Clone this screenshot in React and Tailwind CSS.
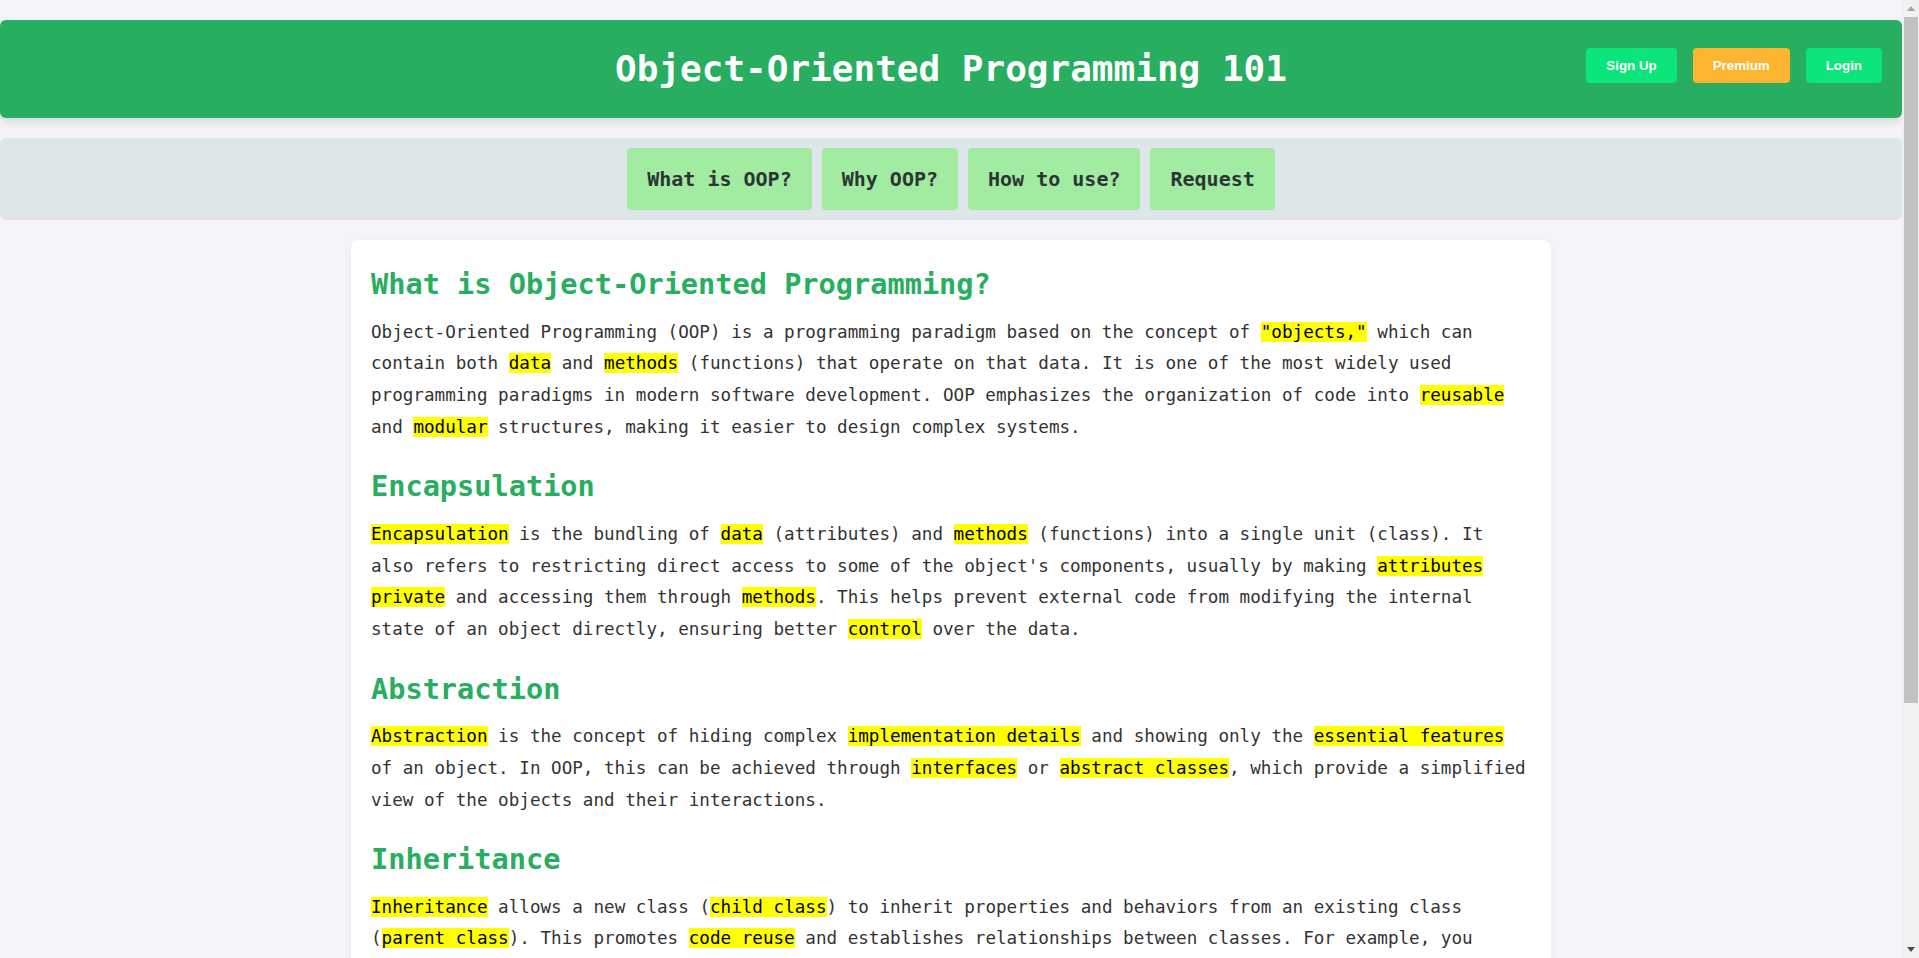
import React from 'react';

const mono = "font-['DejaVu_Sans_Mono','Liberation_Mono',monospace]";

const Hl = ({ children }) => <span className="bg-[#ffff00] text-black">{children}</span>;

const sections = [
  {
    title: 'What is Object-Oriented Programming?',
    body: (
      <>
        Object-Oriented Programming (OOP) is a programming paradigm based on the concept of <Hl>"objects,"</Hl> which can
        contain both <Hl>data</Hl> and <Hl>methods</Hl> (functions) that operate on that data. It is one of the most widely used
        programming paradigms in modern software development. OOP emphasizes the organization of code into <Hl>reusable</Hl> and{' '}
        <Hl>modular</Hl> structures, making it easier to design complex systems.
      </>
    ),
  },
  {
    title: 'Encapsulation',
    body: (
      <>
        <Hl>Encapsulation</Hl> is the bundling of <Hl>data</Hl> (attributes) and <Hl>methods</Hl> (functions) into a single unit (class). It
        also refers to restricting direct access to some of the object's components, usually by making <Hl>attributes</Hl>{' '}
        <Hl>private</Hl> and accessing them through <Hl>methods</Hl>. This helps prevent external code from modifying the internal
        state of an object directly, ensuring better <Hl>control</Hl> over the data.
      </>
    ),
  },
  {
    title: 'Abstraction',
    body: (
      <>
        <Hl>Abstraction</Hl> is the concept of hiding complex <Hl>implementation details</Hl> and showing only the <Hl>essential features</Hl>{' '}
        of an object. In OOP, this can be achieved through <Hl>interfaces</Hl> or <Hl>abstract classes</Hl>, which provide a simplified
        view of the objects and their interactions.
      </>
    ),
  },
  {
    title: 'Inheritance',
    body: (
      <>
        <Hl>Inheritance</Hl> allows a new class (<Hl>child class</Hl>) to inherit properties and behaviors from an existing class
        (<Hl>parent class</Hl>). This promotes <Hl>code reuse</Hl> and establishes relationships between classes. For example, you
        could create a general "Vehicle" class and then extend it into more specific classes like "Car" or "Bike".
      </>
    ),
  },
  {
    title: 'Polymorphism',
    body: (
      <>
        <Hl>Polymorphism</Hl> means "many forms." It allows objects of different classes to be treated as objects of a common
        parent class. The same <Hl>method</Hl> can behave differently depending on the object that calls it, through{' '}
        <Hl>method overriding</Hl> and <Hl>method overloading</Hl>.
      </>
    ),
  },
];

// classic browser scrollbar, drawn since headless chrome hides it
const Scrollbar = () => (
  <div className="w-[17px] shrink-0 h-full flex flex-col bg-[#f1f1f1]">
    <div className="h-[17px] flex items-center justify-center">
      <svg width="8" height="5" viewBox="0 0 8 5"><path d="M0 5 L4 0 L8 5 Z" fill="#a3a3a3" /></svg>
    </div>
    <div className="h-[686px] ml-[2px] mr-[1px] bg-[#c1c1c1]" />
    <div className="flex-1" />
    <div className="h-[17px] flex items-center justify-center">
      <svg width="8" height="5" viewBox="0 0 8 5"><path d="M0 0 L8 0 L4 5 Z" fill="#505050" /></svg>
    </div>
  </div>
);

const App = () => {
  return (
    <div className={`flex h-screen overflow-hidden bg-[#f4f4f9] ${mono}`}>
      <div className="flex-1 min-w-0 h-full overflow-hidden">
        <div className="pt-5 pb-10">
          <header className="relative flex items-center justify-center h-[98px] bg-[#27ae60] rounded-[6px] shadow-[0_4px_10px_rgba(0,0,0,0.12)]">
            <h1 className="text-[36px] font-bold text-white leading-none">Object-Oriented Programming 101</h1>
            <div className="absolute right-5 top-[28px] flex gap-4 font-['Liberation_Sans',Arial,sans-serif]">
              <button className="px-5 py-[10px] text-[13.333px] leading-[15px] font-bold text-white bg-[#0be57b] rounded-[4px]">Sign Up</button>
              <button className="px-5 py-[10px] text-[13.333px] leading-[15px] font-bold text-white bg-[#fdb430] rounded-[4px]">Premium</button>
              <button className="px-5 py-[10px] text-[13.333px] leading-[15px] font-bold text-white bg-[#0be57b] rounded-[4px]">Login</button>
            </div>
          </header>

          <nav className="mt-5 flex justify-center gap-[10px] py-[10px] bg-[#dfe6e9] rounded-[6px]">
            {['What is OOP?', 'Why OOP?', 'How to use?', 'Request'].map((label) => (
              <button
                key={label}
                className="px-5 py-5 text-[20px] leading-[22px] font-bold text-[#2d3436] bg-[#a1eca1] rounded-[4px]"
              >
                {label}
              </button>
            ))}
          </nav>

          <main className="mt-5 mx-auto max-w-[1200px] bg-white rounded-[8px] p-5 shadow-[0_2px_8px_rgba(0,0,0,0.06)]">
            {sections.map((s) => (
              <section key={s.title}>
                <h2 className="mt-[7px] mb-[15px] text-[28.6px] leading-[34.5px] font-bold text-[#27ae60]">{s.title}</h2>
                <p className="mb-[26px] text-[17.6px] leading-[31.7px] text-[#333]">{s.body}</p>
              </section>
            ))}
          </main>
        </div>
      </div>
      <Scrollbar />
    </div>
  );
};

export default App;
